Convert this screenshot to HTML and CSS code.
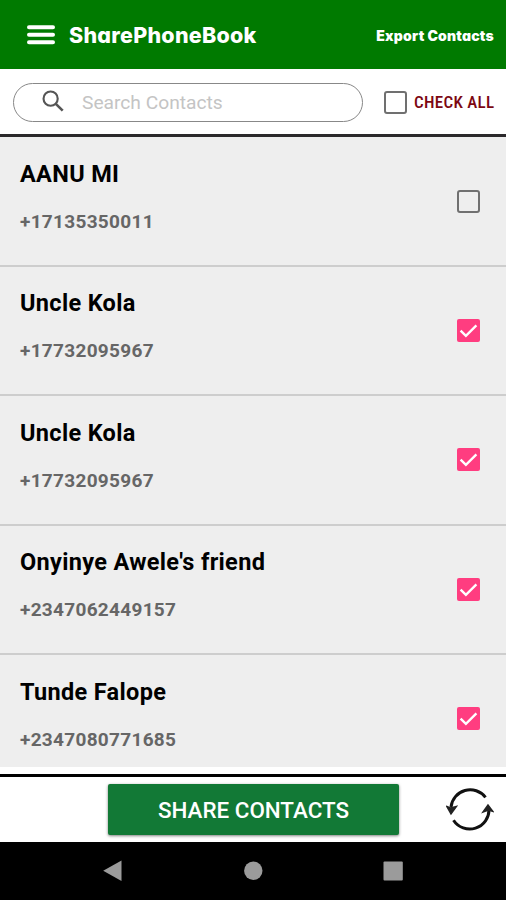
FILE: index.html
```html
<!DOCTYPE html>
<html lang="en">
<head>
<meta charset="utf-8">
<title>SharePhoneBook</title>
<link rel="stylesheet" href="styles.css">
</head>
<body>
<header class="appbar">
  <svg class="menu" viewBox="0 0 28 20"><path d="M2 2.2H26M2 9.7H26M2 17.2H26" stroke="#fff" stroke-width="4" stroke-linecap="round"/></svg>
  <h1 class="title">SharePhoneBook</h1>
  <span class="export">Export Contacts</span>
</header>
<section class="toolbar">
  <div class="search">
    <svg class="lens" viewBox="0 0 24 24"><circle cx="9" cy="9" r="7.4" fill="none" stroke="#555" stroke-width="2.2"/><path d="M14.4 14.4L21.6 21.6" stroke="#555" stroke-width="2.7"/></svg>
    <span class="placeholder">Search Contacts</span>
  </div>
  <span class="box"></span>
  <span class="checkall">CHECK ALL</span>
</section>
<main class="list">
  <article class="row"><div class="who"><div class="name">AANU MI</div><div class="phone">+17135350011</div></div><span class="box"></span></article>
  <article class="row"><div class="who"><div class="name">Uncle Kola</div><div class="phone">+17732095967</div></div><span class="box on"><svg viewBox="0 0 23 23"><path d="M3.6 11.6L8.9 16.8L19.4 6.3"/></svg></span></article>
  <article class="row"><div class="who"><div class="name">Uncle Kola</div><div class="phone">+17732095967</div></div><span class="box on"><svg viewBox="0 0 23 23"><path d="M3.6 11.6L8.9 16.8L19.4 6.3"/></svg></span></article>
  <article class="row"><div class="who"><div class="name">Onyinye Awele's friend</div><div class="phone">+2347062449157</div></div><span class="box on"><svg viewBox="0 0 23 23"><path d="M3.6 11.6L8.9 16.8L19.4 6.3"/></svg></span></article>
  <article class="row"><div class="who"><div class="name">Tunde Falope</div><div class="phone">+2347080771685</div></div><span class="box on"><svg viewBox="0 0 23 23"><path d="M3.6 11.6L8.9 16.8L19.4 6.3"/></svg></span></article>
</main>
<footer class="actions">
  <button class="share">SHARE CONTACTS</button>
  <svg class="sync" viewBox="0 0 48 44">
    <path d="M39.5 9.3A19.3 19.3 0 0 0 5 19M7.5 32.2A19.3 19.3 0 0 0 43 21" fill="none" stroke="#111" stroke-width="3"/>
    <path d="M.8 18.5L4.5 20L10.5 18.5L5 26ZM37 24L42 17L47 23.5L42.5 22Z" fill="#222" stroke="#222" stroke-width="1.4"/>
  </svg>
</footer>
<nav class="sysbar">
  <svg viewBox="0 0 20 22"><path d="M.2 10.7L18.5 .6V21Z" fill="#9b9b9b"/></svg>
  <svg viewBox="0 0 20 22"><circle cx="10.3" cy="10.8" r="9.2" fill="#9b9b9b"/></svg>
  <svg viewBox="0 0 20 22"><rect x=".5" y="1.5" width="19.3" height="19" rx="1" fill="#9b9b9b"/></svg>
</nav>
</body>
</html>
```
FILE: styles.css
```css
* { box-sizing: border-box; }
body {
  margin: 0;
  width: 506px;
  height: 900px;
  overflow: hidden;
  display: flex;
  flex-direction: column;
  background: #fff;
  font-family: Roboto, "Liberation Sans", sans-serif;
  white-space: nowrap;
}
svg { display: block; flex: none; }

.appbar {
  height: 69px;
  flex: none;
  display: flex;
  align-items: center;
  padding: 0 12px 0 27px;
  background: #007a00;
  color: #fff;
  font-family: Inter, sans-serif;
  font-feature-settings: "cv11";
}
.menu { width: 28px; height: 20px; }
.title { margin: 0 0 0 14px; font-size: 21.5px; font-weight: 800; line-height: 30px; letter-spacing: .25px; }
.export { margin: 2px 0 0 auto; font-size: 14px; font-weight: 900; line-height: 20px; letter-spacing: .2px; }

.toolbar {
  height: 68px;
  flex: none;
  display: flex;
  align-items: center;
  padding: 1px 0 0 13px;
  border-bottom: 3px solid #2b292b;
}
.search {
  width: 350px;
  height: 39px;
  margin-right: 21px;
  display: flex;
  align-items: center;
  padding-left: 28px;
  border: 1.5px solid #888;
  border-radius: 20px;
}
.lens { width: 23px; height: 23px; margin-bottom: 2px; }
.placeholder { margin: 1px 0 0 17px; font-size: 19.2px; color: #c4c4c4; }
.checkall {
  margin-left: 7px;
  font-family: "Roboto Condensed", Roboto, sans-serif;
  font-stretch: 75%;
  font-size: 17px;
  font-weight: 500;
  letter-spacing: .3px;
  color: #7c0712;
}

.box {
  width: 23px;
  height: 23px;
  flex: none;
  border: 2px solid #707070;
  border-radius: 3px;
}
.box.on { border: 0; border-radius: 2px; background: #ff3d80; }
.box.on svg { width: 23px; height: 23px; fill: none; stroke: #fff; stroke-width: 2.4; }

.list { height: 630px; flex: none; padding-top: .4px; overflow: hidden; background: #eee; }
.row {
  height: 129.4px;
  display: flex;
  align-items: center;
  justify-content: space-between;
  padding: 0 26px 0 20px;
  border-bottom: 2px solid #cdcdcd;
}
.who { padding-bottom: 8px; }
.name { font-size: 23.5px; font-weight: 700; line-height: 30px; letter-spacing: .33px; color: #000; }
.phone { margin-top: 20px; font-size: 19px; font-weight: 700; line-height: 26px; letter-spacing: .3px; color: #666; }

.actions {
  height: 68px;
  flex: none;
  display: flex;
  align-items: center;
  margin-top: 6.5px;
  padding-left: 108px;
  border-top: 3px solid #000;
}
.share {
  width: 291px;
  height: 51px;
  padding: 2px 0 0;
  border: 0;
  border-radius: 2px;
  background: #127936;
  box-shadow: 0 1px 3px rgba(0, 0, 0, .5);
  color: #fff;
  font: 500 22.4px Roboto, sans-serif;
}
.sync { width: 48px; height: 44px; margin: 2px 0 0 47px; }

.sysbar {
  flex: 1;
  display: flex;
  align-items: center;
  justify-content: center;
  gap: 120px;
  background: #000;
}
.sysbar svg { width: 20px; height: 22px; }
```
